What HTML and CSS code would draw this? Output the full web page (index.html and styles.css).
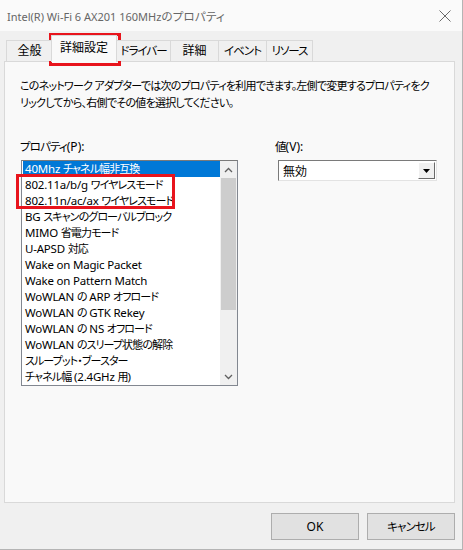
FILE: index.html
```html
<!DOCTYPE html>
<html lang="ja">
<head>
<meta charset="utf-8">
<link rel="stylesheet" href="styles.css">
</head>
<body>
<div class="window">
  <div class="titlebar">
    <span class="title">Intel(R) Wi-Fi 6 AX201 160MHz<span class="tj">のプロパティ</span></span>
    <svg class="close" width="12" height="12" viewBox="0 0 12 12"><path d="M0.5 0.5 L11.5 11.5 M11.5 0.5 L0.5 11.5" stroke="#6a6a6a" stroke-width="1" fill="none"/></svg>
  </div>
  <div class="content">
    <div class="tabs">
      <div class="tab t1">全般</div>
      <div class="tab active">詳細設定</div>
      <div class="tab t3"><span class="k">ドライバー</span></div>
      <div class="tab t4">詳細</div>
      <div class="tab t5"><span class="k">イベント</span></div>
      <div class="tab t6"><span class="k">リソース</span></div>
    </div>
    <div class="panel">
      <p class="desc">このネットワーク アダプターでは次のプロパティを利用できます。左側で変更するプロパティをク<br>リックしてから、右側でその値を選択してください。</p>
      <div class="fields">
        <div class="col-left">
          <div class="label"><span class="j">プロパティ</span>(P):</div>
          <div class="listbox">
            <ul class="items">
              <li class="sel">40Mhz <span class="j">チャネル幅非互換</span></li>
              <li>802.11a/b/g <span class="j">ワイヤレスモード</span></li>
              <li>802.11n/ac/ax <span class="j">ワイヤレスモード</span></li>
              <li>BG <span class="j">スキャンのグローバルブロック</span></li>
              <li>MIMO <span class="j">省電力モード</span></li>
              <li>U-APSD <span class="j">対応</span></li>
              <li>Wake on Magic Packet</li>
              <li>Wake on Pattern Match</li>
              <li>WoWLAN <span class="j">の</span> ARP <span class="j">オフロード</span></li>
              <li>WoWLAN <span class="j">の</span> GTK Rekey</li>
              <li>WoWLAN <span class="j">の</span> NS <span class="j">オフロード</span></li>
              <li>WoWLAN <span class="j">のスリープ状態の解除</span></li>
              <li><span class="j">スループット・ブースター</span></li>
              <li><span class="j">チャネル幅</span> (2.4GHz <span class="j">用</span>)</li>
            </ul>
            <div class="scrollbar">
              <div class="arrow"><svg width="9" height="6" viewBox="0 0 9 6"><path d="M1 5 L4.5 1.5 L8 5" stroke="#606060" stroke-width="1.3" fill="none"/></svg></div>
              <div class="track"><div class="thumb"></div></div>
              <div class="arrow"><svg width="9" height="6" viewBox="0 0 9 6"><path d="M1 1 L4.5 4.5 L8 1" stroke="#606060" stroke-width="1.3" fill="none"/></svg></div>
            </div>
          </div>
        </div>
        <div class="col-right">
          <div class="label"><span class="j">値</span>(V):</div>
          <div class="combo">
            <span class="combo-text">無効</span>
            <span class="combo-btn"><svg width="7" height="4" viewBox="0 0 7 4"><path d="M0 0 H7 L3.5 4 Z" fill="#000"/></svg></span>
          </div>
        </div>
      </div>
    </div>
    <div class="buttons">
      <div class="btn">OK</div>
      <div class="btn"><span class="j">キャンセル</span></div>
    </div>
  </div>
  <div class="mark mark-tab"></div>
  <div class="mark mark-items"></div>
</div>
</body>
</html>
```
FILE: styles.css
```css
* { box-sizing: border-box; }
html, body { margin: 0; padding: 0; }
body {
  font-family: "Noto Sans", "Noto Sans CJK JP", sans-serif;
  font-size: 12px;
  font-feature-settings: "palt";
  color: #000;
  background: #f0f0f0;
}
.j {
  font-size: 11.5px;
  letter-spacing: -0.9px;
}
.k {
  font-size: 11.5px;
  letter-spacing: -1px;
}
.window {
  position: relative;
  width: 463px;
  height: 550px;
  background: #f0f0f0;
  border-right: 1px solid #b4b4b4;
  border-bottom: 1px solid #b4b4b4;
  overflow: hidden;
}
.titlebar {
  height: 31px;
  background: #fafafa;
  display: flex;
  align-items: center;
  justify-content: space-between;
  padding: 0 11px 0 7px;
}
.title { color: #666; font-size: 11px; }
.tj { font-size: 11.5px; letter-spacing: 0.2px; }
.content { padding: 0 7px 0 4px; }
.tabs {
  display: flex;
  align-items: flex-end;
  height: 30px;
  padding-left: 2px;
  position: relative;
  z-index: 2;
}
.tab {
  height: 21px;
  line-height: 19px;
  border: 1px solid #d9d9d9;
  border-bottom: none;
  border-right: none;
  background: #f0f0f0;
  text-align: center;
  white-space: nowrap;
}
.tab.t1 { width: 46px; }
.tab.active {
  width: 66px;
  height: 27px;
  line-height: 24px;
  background: #f9f9f9;
  border-right: 1px solid #d9d9d9;
  margin-left: -1px;
  margin-bottom: -1px;
  position: relative;
}
.tab.t3 { width: 53px; border-left: none; }
.tab.t4 { width: 48px; }
.tab.t5 { width: 48px; }
.tab.t6 { width: 47px; border-right: 1px solid #d9d9d9; }
.panel {
  height: 442px;
  border: 1px solid #d9d9d9;
  background: #f9f9f9;
  padding: 15px 0 0 15px;
}
.desc {
  margin: 0;
  line-height: 17px;
  font-size: 11px;
  letter-spacing: -0.75px;
  white-space: nowrap;
}
.fields {
  display: flex;
  margin-top: 28px;
}
.label { height: 21px; line-height: 16px; }
.col-left { width: 217px; }
.listbox {
  margin-left: 1px;
  width: 217px;
  height: 226px;
  border: 1px solid #828790;
  border-top-color: #7a7a7a;
  background: #fff;
  display: flex;
}
.items {
  list-style: none;
  margin: 0;
  padding: 0 0 0 1px;
  flex: 1;
  font-size: 11.5px;
  letter-spacing: -0.2px;
}
.items .j { font-size: 11px; letter-spacing: -0.9px; }
.items li {
  height: 16px;
  line-height: 16px;
  padding-left: 2px;
  white-space: nowrap;
}
.items li.sel { background: #0078d7; color: #fff; }
.scrollbar {
  width: 17px;
  background: #f0f0f0;
  display: flex;
  flex-direction: column;
}
.arrow {
  height: 17px;
  display: flex;
  align-items: center;
  justify-content: center;
}
.track { flex: 1; }
.thumb {
  margin: 0 1px;
  height: 132px;
  background: #cdcdcd;
}
.col-right { margin-left: 38px; }
.combo {
  margin-left: 3px;
  width: 159px;
  height: 21px;
  border: 1px solid #7a7a7a;
  border-right-color: #e3e3e3;
  border-bottom-color: #e3e3e3;
  background: #fff;
  display: flex;
  align-items: center;
  justify-content: space-between;
  padding: 1px;
}
.combo-text { padding-left: 3px; }
.combo-btn {
  width: 17px;
  height: 17px;
  background: #f0f0f0;
  border: 1px solid #fff;
  border-right-color: #696969;
  border-bottom-color: #696969;
  display: flex;
  align-items: center;
  justify-content: center;
}
.buttons {
  display: flex;
  justify-content: flex-end;
  gap: 8px;
  margin-top: 10px;
}
.btn {
  width: 88px;
  height: 27px;
  line-height: 25px;
  text-align: center;
  background: #e1e1e1;
  border: 1px solid #adadad;
}
.mark {
  position: absolute;
  border: 3px solid #e8141c;
}
.mark-tab { left: 49px; top: 33px; width: 72px; height: 33px; }
.mark-items { left: 16px; top: 174px; width: 159px; height: 35px; }
```
